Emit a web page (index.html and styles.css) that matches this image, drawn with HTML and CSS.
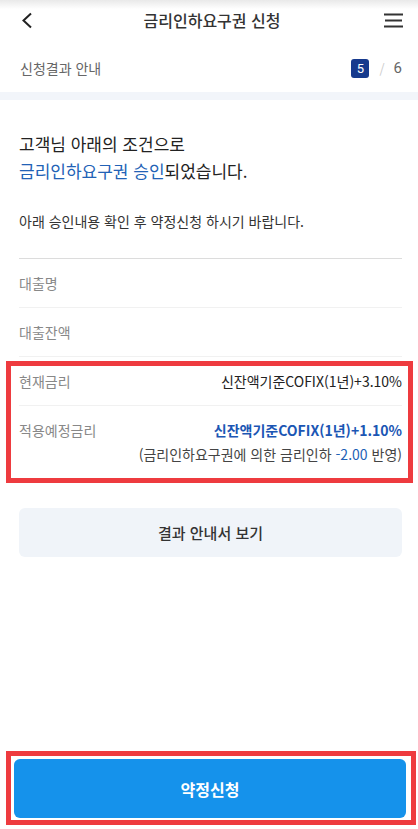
FILE: index.html
```html
<!DOCTYPE html>
<html lang="ko">
<head>
    <meta charset="UTF-8">
    <meta name="viewport" content="width=device-width, initial-scale=1.0">
    <title>금리인하요구권 신청</title>
    <link rel="stylesheet" href="styles.css">
</head>
<body>
    <div class="page">
        <!-- Header -->
        <header class="header">
            <span class="back">
                <svg width="12" height="17" viewBox="0 0 12 17"><path d="M10 1.5 L2.5 8.5 L10 15.5" fill="none" stroke="#222" stroke-width="2"/></svg>
            </span>
            <h1 class="title">금리인하요구권 신청</h1>
            <span class="menu">
                <svg width="19" height="15" viewBox="0 0 19 15"><path d="M0 1.5H19M1 7.5H18M0 13.5H19" stroke="#333" stroke-width="2"/></svg>
            </span>
        </header>

        <div class="step">
            <span class="step-name">신청결과 안내</span>
            <span class="step-count"><span class="step-now">5</span><span class="step-slash">/</span><span class="step-total">6</span></span>
        </div>
        <div class="band"></div>

        <!-- Result -->
        <main class="content">
            <p class="lead">고객님 아래의 조건으로<br><span class="hl">금리인하요구권 승인</span>되었습니다.</p>
            <p class="desc">아래 승인내용 확인 후 약정신청 하시기 바랍니다.</p>

            <div class="rows">
                <div class="row">
                    <span class="label">대출명</span>
                </div>
                <div class="row">
                    <span class="label">대출잔액</span>
                </div>
                <div class="marked">
                    <div class="row">
                        <span class="label">현재금리</span>
                        <span class="value">신잔액기준COFIX(1년)+3.10%</span>
                    </div>
                    <div class="row row-top">
                        <span class="label">적용예정금리</span>
                        <span class="value">
                            <strong class="value-new">신잔액기준COFIX(1년)+1.10%</strong>
                            <span class="value-note">(금리인하요구권에 의한 금리인하 <em>-2.00</em> 반영)</span>
                        </span>
                    </div>
                </div>
            </div>

            <button class="btn-sub">결과 안내서 보기</button>
        </main>

        <footer class="footer">
            <button class="btn-main">약정신청</button>
        </footer>
    </div>
</body>
</html>
```

FILE: styles.css
```css
* {
    box-sizing: border-box;
}

body {
    margin: 0;
    font-family: 'Noto Sans CJK KR', 'Noto Sans', sans-serif;
    color: #222;
    background-color: #fff;
}

.page {
    display: flex;
    flex-direction: column;
    min-height: 100vh;
}

.header {
    display: flex;
    align-items: center;
    justify-content: space-between;
    height: 40px;
    padding: 0 15px 0 21px;
    background: linear-gradient(#e9e9e9, #fff 9px);
}

.back, .menu {
    display: flex;
    width: 20px;
}

.menu {
    justify-content: flex-end;
}

.title {
    margin: 0;
    font-size: 16px;
    font-weight: 500;
    color: #333;
}

.step {
    display: flex;
    align-items: center;
    justify-content: space-between;
    height: 52px;
    padding: 4px 16px 0 20px;
}

.step-name {
    font-size: 14px;
    color: #666;
}

.step-count {
    display: flex;
    align-items: center;
    font-size: 14px;
    color: #666;
}

.step-now {
    display: inline-flex;
    align-items: center;
    justify-content: center;
    width: 18px;
    height: 19px;
    border-radius: 3px;
    background-color: #163a8d;
    color: #fff;
    font-size: 13px;
    font-family: 'Roboto', sans-serif;
}

.step-slash {
    margin: 0 9px 0 10px;
    color: #ccc;
    font-size: 13px;
}

.step-total {
    font-family: 'Roboto', sans-serif;
    font-size: 15px;
}

.band {
    height: 8px;
    background-color: #f2f5fa;
}

.content {
    padding: 0 16px 0 19px;
}

.lead {
    margin: 30px 0 0;
    font-size: 17px;
    line-height: 27px;
    color: #222;
}

.hl {
    color: #2262b6;
}

.desc {
    margin: 27px 0 0;
    font-size: 14px;
    line-height: 20px;
    color: #333;
}

.rows {
    margin-top: 27px;
    border-top: 1px solid #dcdcdc;
}

.row {
    display: flex;
    align-items: center;
    justify-content: space-between;
    min-height: 49px;
    border-bottom: 1px solid #f1f1f1;
    font-size: 14px;
}

.row-top {
    align-items: flex-start;
    padding: 14px 0 10px;
    border-bottom: none;
}

.label {
    color: #888;
    line-height: 20px;
}

.value {
    display: flex;
    flex-direction: column;
    align-items: flex-end;
    color: #222;
    line-height: 20px;
}

.value-new {
    color: #1b56b4;
    font-weight: 700;
}

.value-note {
    margin-top: 4px;
    color: #444;
}

.value-note em {
    font-style: normal;
    color: #2262b6;
}

.marked {
    position: relative;
}

/* red highlight box drawn over the rates */
.marked::after {
    content: "";
    position: absolute;
    left: -13px;
    right: -11px;
    top: 4px;
    bottom: -9px;
    border: 5px solid #ee3b3f;
    pointer-events: none;
}

.btn-sub {
    display: block;
    width: 100%;
    height: 49px;
    margin-top: 34px;
    border: none;
    border-radius: 6px;
    background-color: #f0f4f9;
    color: #333;
    font-family: inherit;
    font-size: 15px;
    font-weight: 500;
}

.footer {
    margin: auto 2px 4px 6px;
    padding: 3px 5px 2px 3px;
    border: 5px solid #ee3b3f;
}

.btn-main {
    display: block;
    width: 100%;
    height: 59px;
    border: none;
    border-radius: 6px;
    background-color: #1592eb;
    color: #fff;
    font-family: inherit;
    font-size: 16px;
    font-weight: 700;
}
```
